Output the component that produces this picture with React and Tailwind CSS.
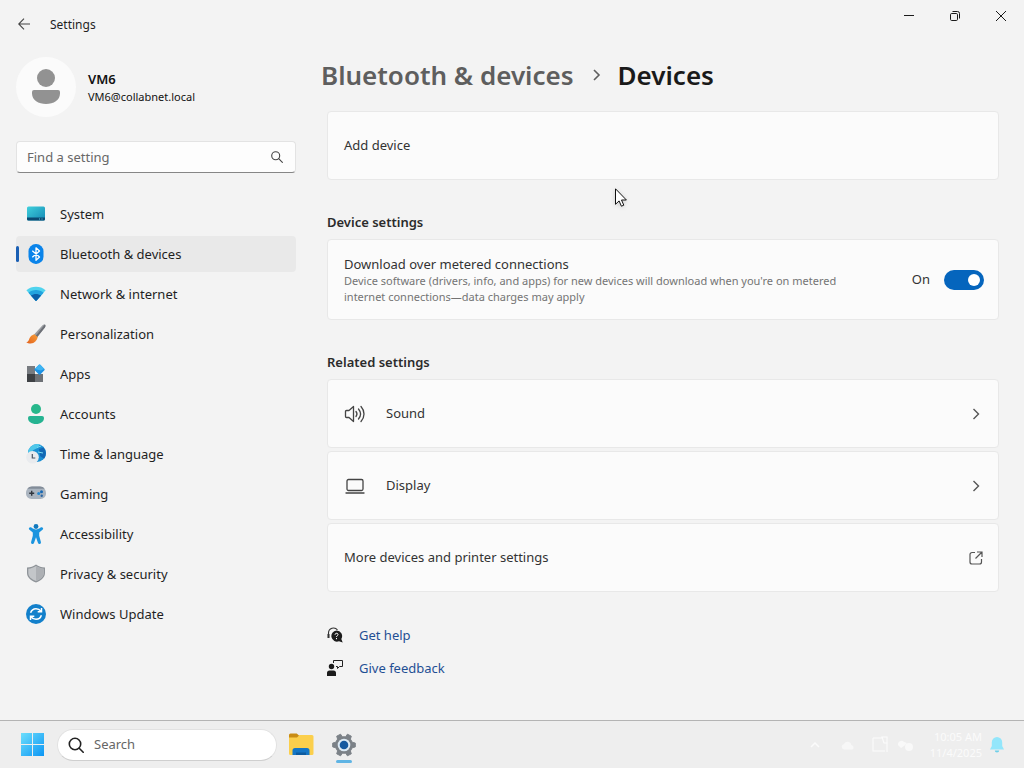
import React, { useState } from "react";

function SystemIcon() {
    return (
        <svg viewBox="0 0 20 20" className="h-5 w-5">
            <defs>
                <linearGradient id="screen" x1="0" y1="0" x2="1" y2="1">
                    <stop offset="0" stopColor="#3fd0dc" />
                    <stop offset="1" stopColor="#1488b4" />
                </linearGradient>
            </defs>
            <rect x="1" y="2.500" width="18" height="14" rx="1.500" fill="url(#screen)" />
            <path d="M1 13.500h18V15a1.500 1.500 0 0 1-1.500 1.500h-15A1.500 1.500 0 0 1 1 15z" fill="#0b4a72" />
            <path d="M13 15h1M15.500 15h1" stroke="#58c3dd" strokeWidth="1" />
        </svg>
    );
}

function BluetoothIcon() {
    return (
        <svg viewBox="0 0 20 20" className="h-5 w-5">
            <rect x="2.500" y="0" width="15" height="20" rx="7.300" fill="#0a84ea" />
            <path d="M6.300 6.700l7.200 6.300-3.500 3.200V3.800L13.500 7l-7.200 6.300" fill="none" stroke="#fff" strokeWidth="1.300" strokeLinejoin="round" />
        </svg>
    );
}

function NetworkIcon() {
    return (
        <svg viewBox="0 0 20 20" className="h-5 w-5">
            <path d="M.4 6.200C5.700 1.600 14.300 1.600 19.600 6.200L10.700 16.600q-.7.700-1.400 0z" fill="#4fd3ee" />
            <path d="M2.400 8.800C6.800 5.200 13.200 5.200 17.600 8.800L10.700 16.600q-.7.700-1.400 0z" fill="#22a3df" />
            <path d="M4.900 11.600C7.900 9.300 12.100 9.300 15.100 11.600L10.700 16.600q-.7.700-1.400 0z" fill="#0c5fa8" />
        </svg>
    );
}

function PersonalizationIcon() {
    return (
        <svg viewBox="0 0 20 20" className="h-5 w-5">
            <defs>
                <linearGradient id="bristle" x1="1" y1="0" x2="0" y2="1">
                    <stop offset="0" stopColor="#f9a13a" />
                    <stop offset="1" stopColor="#e2601c" />
                </linearGradient>
            </defs>
            <path d="M18.800.600c1 .7.700 2 .1 3L10.500 14 7.400 11.300 16.300 1.400c.8-.8 1.700-1.300 2.500-.8z" fill="#9a9da2" />
            <path d="M18.800.600c1 .7.700 2 .1 3L10.500 14l-1.500-1.300z" fill="#6c6f76" />
            <path d="M8.300 10.200l3.400 2.900c-.7 3.500-3.200 6.300-7 6.500-1.900 0-3.400-.4-4.400-1.300 2.400-.6 2.300-1.900 3.200-4 .8-1.900 2.500-3.500 4.800-4.100z" fill="url(#bristle)" />
        </svg>
    );
}

function AppsIcon() {
    return (
        <svg viewBox="0 0 20 20" className="h-5 w-5">
            <path d="M1 2h8v8H1z" fill="#777b80" />
            <path d="M1 10h8v8H1z" fill="#3e4145" />
            <path d="M9 10h8v8H9z" fill="#6d7176" />
            <path d="M12.900.8q.7-.6 1.400 0l4.100 4.100q.7.700 0 1.400l-4.100 4.200q-.7.600-1.400 0L8.700 6.300q-.6-.7 0-1.400z" fill="#1c91e4" />
            <path d="M12.900.8q.7-.6 1.400 0l4.100 4.100-3.600 1.600L8.700 4.900z" fill="#3fb4f2" />
        </svg>
    );
}

function AccountsIcon() {
    return (
        <svg viewBox="0 0 20 20" className="h-5 w-5">
            <circle cx="10" cy="5" r="5" fill="#27b78b" />
            <path d="M4 12h12a2 2 0 0 1 2 2c0 3.600-3.300 6-8 6s-8-2.400-8-6a2 2 0 0 1 2-2z" fill="#25b391" />
        </svg>
    );
}

function TimeIcon() {
    return (
        <svg viewBox="0 0 20 20" className="h-5 w-5">
            <circle cx="11" cy="9" r="9" fill="#1a8fd3" />
            <path d="M4.500 3C7 .5 10.500-.4 13.700.4L11.500 4 7.500 6l-3 3-2.400-.7C2.300 6 3 4.500 4.500 3z" fill="#4fc8ea" />
            <path d="M13 5l4.500-1.500c3 3.800 3 7.500.6 11.300L14 12z" fill="#1268b5" />
            <path d="M11 3.500l4-1.500M12 8l5 1" stroke="#79dcf2" strokeWidth="1" />
            <circle cx="6.500" cy="13.300" r="6.300" fill="#e9ebee" />
            <path d="M6.300 10v4h3" fill="none" stroke="#4b5563" strokeWidth="1.200" />
        </svg>
    );
}

function GamingIcon() {
    return (
        <svg viewBox="0 0 20 20" className="h-5 w-5">
            <path d="M6 2.500h8c3.500 0 6 3 6 6.500a5.500 5.500 0 0 1-5.500 6h-9A5.500 5.500 0 0 1 0 9c0-3.500 2.500-6.500 6-6.500z" fill="#aab4bf" />
            <path d="M6 2.500h8c1.900 0 3.500.9 4.600 2.300H1.400C2.500 3.400 4.100 2.500 6 2.500z" fill="#828c98" />
            <path d="M5.700 6.700v5M3.200 9.200h5" stroke="#30363e" strokeWidth="1.400" />
            <circle cx="15.500" cy="7.700" r="1.500" fill="#1667b3" />
            <circle cx="12.700" cy="9.500" r="1.500" fill="#2488d2" />
            <circle cx="15.700" cy="11.700" r="1.200" fill="#2d66a3" />
        </svg>
    );
}

function AccessibilityIcon() {
    return (
        <svg viewBox="0 0 20 20" className="h-5 w-5">
            <circle cx="10" cy="2.500" r="2.400" fill="#1279bd" />
            <path d="M3.200 3.700c.6-.8 1.500-.7 2.200-.1C7.800 6 12.200 6 14.600 3.600c.7-.6 1.600-.7 2.200.1.6.7.4 1.500-.3 2.100L13.200 8.400v3.400l1.700 6.200c.2 1-.2 1.700-1 1.900-.9.300-1.600-.2-1.900-1l-2-5.600-2 5.600c-.3.8-1 1.300-1.900 1-.8-.2-1.200-.9-1-1.900l1.700-6.200V8.400L3.500 5.800c-.7-.6-.9-1.400-.3-2.100z" fill="#1a94df" />
        </svg>
    );
}

function PrivacyIcon() {
    return (
        <svg viewBox="0 0 20 20" className="h-5 w-5">
            <path d="M10 .5c2.600 2 5.500 2.800 9 3V9c0 4.200-3.500 7.500-9 9.500C4.500 16.500 1 13.200 1 9V3.500c3.500-.2 6.400-1 9-3z" fill="#8f9499" />
            <path d="M10 2c2.300 1.600 4.800 2.400 7.700 2.700V9c0 3.500-2.900 6.200-7.700 8-4.800-1.800-7.700-4.500-7.700-8V4.700C5.200 4.400 7.700 3.600 10 2z" fill="#c3c6c9" />
            <path d="M10 2c2.300 1.600 4.800 2.400 7.700 2.700V9c0 3.500-2.900 6.200-7.700 8z" fill="#adb0b4" />
        </svg>
    );
}

function UpdateIcon() {
    return (
        <svg viewBox="0 0 20 20" className="h-5 w-5">
            <circle cx="10" cy="10" r="10" fill="#1380cb" />
            <path d="M4.600 8.800C5.500 6 7.500 4.700 10 4.700c2 0 3.800.9 5 2.600M15.400 11.200c-.9 2.800-2.900 4.100-5.400 4.100-2 0-3.800-.9-5-2.600" fill="none" stroke="#fff" strokeWidth="1.500" />
            <path d="M15.500 4v3.800h-3.800M4.500 16v-3.800h3.800" fill="none" stroke="#fff" strokeWidth="1.500" />
        </svg>
    );
}

const navItems = [
    { label: "System", Icon: SystemIcon },
    { label: "Bluetooth & devices", Icon: BluetoothIcon, active: true },
    { label: "Network & internet", Icon: NetworkIcon },
    { label: "Personalization", Icon: PersonalizationIcon },
    { label: "Apps", Icon: AppsIcon },
    { label: "Accounts", Icon: AccountsIcon },
    { label: "Time & language", Icon: TimeIcon },
    { label: "Gaming", Icon: GamingIcon },
    { label: "Accessibility", Icon: AccessibilityIcon },
    { label: "Privacy & security", Icon: PrivacyIcon },
    { label: "Windows Update", Icon: UpdateIcon }
];

function TitleBar() {
    return (
        <header className="flex h-12 items-start justify-between">
            <div className="flex h-12 items-center">
                <button type="button" aria-label="Back" className="flex h-10 w-12 items-center justify-center text-[#444]">
                    <svg viewBox="0 0 12 12" className="h-3 w-3" fill="none" stroke="currentColor" strokeWidth="1.100">
                        <path d="M12 6H.7M6 .7L.7 6 6 11.300" />
                    </svg>
                </button>
                <span className="pt-0.5 pl-0.5 text-xs text-[#1f1f1f]">Settings</span>
            </div>
            <div className="flex text-[#1a1a1a]">
                <button type="button" aria-label="Minimize" className="flex h-8 w-[46px] items-center justify-center">
                    <svg viewBox="0 0 10 10" className="h-2.5 w-2.5" stroke="currentColor"><path d="M0 4.500h10" /></svg>
                </button>
                <button type="button" aria-label="Restore" className="flex h-8 w-[46px] items-center justify-center">
                    <svg viewBox="0 0 10 10" className="h-2.5 w-2.5" fill="none" stroke="currentColor">
                        <rect x=".5" y="2.500" width="7" height="7" rx="1.200" />
                        <path d="M2.500.5h5a2 2 0 0 1 2 2v5" />
                    </svg>
                </button>
                <button type="button" aria-label="Close" className="flex h-8 w-[46px] items-center justify-center">
                    <svg viewBox="0 0 10 10" className="h-2.5 w-2.5" stroke="currentColor"><path d="M0 0l10 10M10 0L0 10" /></svg>
                </button>
            </div>
        </header>
    );
}

function Sidebar() {
    return (
        <aside className="w-[280px] shrink-0 pt-[9px]">
            <div className="flex items-center gap-3">
                <div className="flex h-[60px] w-[60px] items-center justify-center rounded-full bg-[#fbfbfb]">
                    <svg viewBox="0 0 30 36" className="h-9 w-[30px]" fill="#929292">
                        <circle cx="15" cy="9" r="9" />
                        <path d="M3 21h24a2 2 0 0 1 2 2v1.500C29 31 22.500 35 15 35S1 31 1 24.500V23a2 2 0 0 1 2-2z" />
                    </svg>
                </div>
                <div className="pt-0.5 text-[#111]">
                    <div className="text-[13px] leading-[18px] font-semibold">VM6</div>
                    <div className="text-[11px] leading-[18px]">VM6@collabnet.local</div>
                </div>
            </div>
            <div className="mt-6 flex h-8 items-center rounded border border-[#e3e3e3] border-b-[#868686] bg-[#fdfdfd] pr-3 pl-2.5">
                <input
                    type="text"
                    aria-label="Find a setting"
                    placeholder="Find a setting"
                    className="min-w-0 flex-1 bg-transparent pt-0.5 text-[13px] outline-none placeholder:text-[#686868]"
                />
                <svg viewBox="0 0 12 12" className="h-3 w-3" fill="none" stroke="#444" strokeWidth="1.100">
                    <circle cx="4.700" cy="4.700" r="4" />
                    <path d="M7.700 7.700l4 4" />
                </svg>
            </div>
            <nav className="mt-[23px] flex flex-col gap-1">
                {navItems.map(({ label, Icon, active }) => (
                    <a
                        key={label}
                        href="#"
                        aria-current={active ? "page" : undefined}
                        className={`relative flex h-9 items-center gap-3.5 rounded pl-2.5 text-[13px] text-[#1f1f1f] ${active ? "bg-[#e9e9e9]" : ""}`}
                    >
                        {active && <span className="absolute inset-y-2.5 left-0 w-[3px] rounded-full bg-[#1a5fb4]" />}
                        <Icon />
                        <span className="pt-0.5">{label}</span>
                    </a>
                ))}
            </nav>
        </aside>
    );
}

function Chevron() {
    return (
        <svg viewBox="0 0 16 16" className="h-4 w-4" fill="none" stroke="#555" strokeWidth="1.400">
            <path d="M5.500 3l5 5-5 5" />
        </svg>
    );
}

const card = "flex w-full items-center rounded border border-[#e8e8e8] bg-[#fbfbfb] pr-3.5 pl-4 text-left text-[13px] text-[#333]";
const heading = "mt-8 mb-[7px] text-[13px] leading-5 font-semibold text-[#2b2b2b]";

function Content() {
    const [metered, setMetered] = useState(true);

    return (
        <main className="min-w-0 flex-1 pt-[9px]">
            <h1 className="flex h-9 items-center text-[26px] font-semibold text-[#1a1a1a]">
                <a href="#" className="text-[#5e5e5e]">Bluetooth &amp; devices</a>
                <svg viewBox="0 0 12 12" className="mx-4 h-3 w-3" fill="none" stroke="#5e5e5e" strokeWidth="1.600">
                    <path d="M4 1l5 5-5 5" />
                </svg>
                <span>Devices</span>
            </h1>
            <div className="pl-1.5">
                <button type="button" className={`${card} mt-[18px] h-[69px]`}>Add device</button>

                <h2 className={heading}>Device settings</h2>
                <div className={`${card} h-[81px]`}>
                    <div className="min-w-0 flex-1 pr-10">
                        <label htmlFor="metered" className="block leading-[18px]">Download over metered connections</label>
                        <p className="text-[11px] leading-4 text-[#747474]">
                            Device software (drivers, info, and apps) for new devices will download when you're on metered internet connections—data charges may apply
                        </p>
                    </div>
                    <span className="pr-3.5">{metered ? "On" : "Off"}</span>
                    <input
                        id="metered"
                        type="checkbox"
                        role="switch"
                        checked={metered}
                        onChange={(e) => setMetered(e.target.checked)}
                        className="flex h-5 w-10 appearance-none items-center rounded-full bg-[#8a8a8a] px-1 before:block before:h-3 before:w-3 before:rounded-full before:bg-white checked:justify-end checked:bg-[#0565bd]"
                    />
                </div>

                <h2 className={heading}>Related settings</h2>
                <div className="flex flex-col gap-[3px]">
                    <a href="#" className={`${card} h-[69px]`}>
                        <svg viewBox="0 0 22 18" className="mr-5 h-[18px] w-[22px]" fill="none" stroke="#444" strokeWidth="1.300" strokeLinejoin="round" strokeLinecap="round">
                            <path d="M9.500 1.500v15L5 12.500H2.500a1 1 0 0 1-1-1v-5a1 1 0 0 1 1-1H5z" />
                            <path d="M12 6.500c1.200 1.500 1.200 3.500 0 5M14.500 4c2.500 3 2.500 7 0 10M17 1.500c4 4.500 4 10.500 0 15" />
                        </svg>
                        <span className="flex-1">Sound</span>
                        <Chevron />
                    </a>
                    <a href="#" className={`${card} h-[69px]`}>
                        <svg viewBox="0 0 22 18" className="mr-5 h-[18px] w-[22px]" fill="none" stroke="#444" strokeWidth="1.300" strokeLinecap="round">
                            <rect x="3" y="2.500" width="16" height="11" rx="1.500" />
                            <path d="M2 16h18" />
                        </svg>
                        <span className="flex-1">Display</span>
                        <Chevron />
                    </a>
                    <a href="#" className={`${card} h-[69px]`}>
                        <span className="flex-1">More devices and printer settings</span>
                        <svg viewBox="0 0 16 16" className="h-4 w-4" fill="none" stroke="#555" strokeWidth="1.200">
                            <path d="M7 2.500H4A2 2 0 0 0 2 4.500v7.500a2 2 0 0 0 2 2h7.500a2 2 0 0 0 2-2V9M9 2h5v5M14 2L7.500 8.500" />
                        </svg>
                    </a>
                </div>

                <div className="mt-[33px] flex flex-col items-start gap-[13px] text-[13px] leading-5 text-[#1f4f93]">
                    <a href="#" className="flex items-center gap-4">
                        <svg viewBox="0 0 16 16" className="h-4 w-4">
                            <path d="M1.500 10.500V6a5 5 0 0 1 9-3" fill="none" stroke="#333" strokeWidth="1.100" />
                            <path d="M.5 7h2v4h-2z" fill="#333" />
                            <path d="M9.500 3.500a5.600 5.600 0 0 1 4.800 8.500l1.400 3.500-3.700-1.200A5.600 5.600 0 1 1 9.500 3.500z" fill="#1b1b1b" />
                            <path d="M8 7.700c.2-2 3.200-1.800 3 0-.1 1-1.500 1-1.500 2.300M9.500 11v1.200" fill="none" stroke="#fff" strokeWidth="1" />
                        </svg>
                        Get help
                    </a>
                    <a href="#" className="flex items-center gap-4">
                        <svg viewBox="0 0 16 16" className="h-4 w-4">
                            <path d="M6.500 3V.5h9v6h-3l-2 2v-2H9" fill="none" stroke="#222" strokeWidth="1" />
                            <circle cx="4.500" cy="6.500" r="2.700" fill="#1b1b1b" />
                            <path d="M0 16v-3a2.500 2.500 0 0 1 2.500-2.500h4A2.500 2.500 0 0 1 9 13v3z" fill="#1b1b1b" />
                        </svg>
                        Give feedback
                    </a>
                </div>
            </div>
        </main>
    );
}

function Taskbar() {
    return (
        <footer className="flex h-12 items-center border-t border-[#b4b4b4] bg-[#eeeeee] px-5">
            <button type="button" aria-label="Start">
                <svg viewBox="0 0 24 24" className="h-6 w-6">
                    <defs>
                        <linearGradient id="start" gradientUnits="userSpaceOnUse" x1="0" y1="0" x2="24" y2="24">
                            <stop offset="0" stopColor="#6fe0fc" />
                            <stop offset="1" stopColor="#0a94f4" />
                        </linearGradient>
                    </defs>
                    <path d="M1 0h11v11H1zM13 0h11v11H13zM1 12h11v11H1zM13 12h11v11H13z" fill="url(#start)" />
                </svg>
            </button>
            <label className="ml-[13px] flex h-8 w-[220px] items-center gap-2.5 rounded-full border border-[#e2e2e2] border-b-[#cfcfcf] bg-white px-2.5">
                <svg viewBox="0 0 16 16" className="h-4 w-4 shrink-0" fill="none" stroke="#222" strokeWidth="1.600" strokeLinecap="round">
                    <circle cx="7" cy="7" r="5.700" />
                    <path d="M11.200 11.200l4 4" />
                </svg>
                <input type="text" aria-label="Search" placeholder="Search" className="min-w-0 flex-1 bg-transparent text-[13px] outline-none placeholder:text-[#666]" />
            </label>
            <button type="button" aria-label="File Explorer" className="ml-[11px]">
                <svg viewBox="0 0 26 24" className="h-6 w-[26px]">
                    <path d="M1 2A1.500 1.500 0 0 1 2.500.5h6.200L11 2.500V7H1z" fill="#c98c14" />
                    <path d="M1 4.500h8L11.500 2H24a1.500 1.500 0 0 1 1.500 1.500v17A1.500 1.500 0 0 1 24 22H2.500A1.500 1.500 0 0 1 1 20.500z" fill="#fbcf4c" />
                    <path d="M4.500 22v-4.500A2.500 2.500 0 0 1 7 15h12a2.500 2.500 0 0 1 2.500 2.500V22z" fill="#1476c6" />
                    <path d="M8 22v-2.500h10V22z" fill="#0d5b9f" />
                </svg>
            </button>
            <button type="button" aria-label="Settings" className="relative ml-[18px]">
                <svg viewBox="0 0 24 24" className="h-6 w-6">
                    <path d="M10.200 3.800L8.600 1.200 4.700 3.200l.9 2.900-1.900 3.200-3 .8v3.800l3 .8 1.900 3.200-.9 2.900 3.900 2 1.600-2.600h3.600l1.600 2.600 3.900-2-.9-2.900 1.900-3.200 3-.8v-3.800l-3-.8-1.900-3.200.9-2.900-3.900-2-1.600 2.600z" fill="#7b8187" stroke="#7b8187" strokeLinejoin="round" />
                    <circle cx="12" cy="12" r="6.300" fill="#dce9f3" />
                    <circle cx="12" cy="12" r="4.300" fill="#15599f" />
                </svg>
                <span className="absolute -bottom-1.5 left-1 h-[3px] w-4 rounded-full bg-[#5fb4e4]" />
            </button>

            <div className="ml-auto flex items-center text-[11px] text-[#fbfbfb]">
                <svg viewBox="0 0 10 10" className="mr-5 h-2.5 w-2.5" fill="none" stroke="currentColor" strokeWidth="1.500"><path d="M1 7l4-4 4 4" /></svg>
                <svg viewBox="0 0 16 16" className="mr-4 h-4 w-4" fill="#f7f7f7"><path d="M4 12.500a2.800 2.800 0 0 1 0-5.500 4 4 0 0 1 7.500 1A2.500 2.500 0 0 1 12.500 12.500z" /></svg>
                <svg viewBox="0 0 16 18" className="mr-2.5 h-[18px] w-4" fill="none" stroke="currentColor" strokeWidth="1.200">
                    <path d="M15 7v9M1 2v13h12M1 2h9M10 1h5v6h-3z" />
                </svg>
                <svg viewBox="0 0 16 16" className="mr-4 h-4 w-4" fill="#f9f9f9">
                    <path d="M0 8a3.500 3.500 0 0 1 6-3l3 1-3 3-3 2z" />
                    <circle cx="11" cy="10" r="4" />
                </svg>
                <div className="text-right leading-4">
                    <div>10:05 AM</div>
                    <div>11/4/2025</div>
                </div>
                <button type="button" aria-label="Notifications" className="ml-2">
                    <svg viewBox="0 0 14 16" className="h-4 w-3.5">
                        <path d="M7 0a5.200 5.200 0 0 1 5.200 5.200V9L14 12.500H0L1.800 9V5.200A5.200 5.200 0 0 1 7 0z" fill="#93e6fb" />
                        <path d="M4.800 13.500h4.400a2.200 2 0 0 1-4.400 0z" fill="#6fcfe8" />
                    </svg>
                </button>
            </div>
        </footer>
    );
}

export default function App() {
    return (
        <div className="relative flex min-h-screen flex-col bg-[#f3f3f3] font-['Noto_Sans','Open_Sans',sans-serif]">
            <TitleBar />
            <div className="flex flex-1 gap-[25px] pr-[25px] pl-4">
                <Sidebar />
                <Content />
            </div>
            <Taskbar />
            {/* mouse pointer */}
            <svg viewBox="0 0 12 19" className="pointer-events-none absolute top-[188px] left-[615px] h-[19px] w-3 drop-shadow-sm">
                <path d="M.5.800v15.500l3.600-3.400 2.300 5.300 2.400-1-2.300-5.200h4.900z" fill="#fff" stroke="#111" strokeWidth="1" />
            </svg>
        </div>
    );
}
